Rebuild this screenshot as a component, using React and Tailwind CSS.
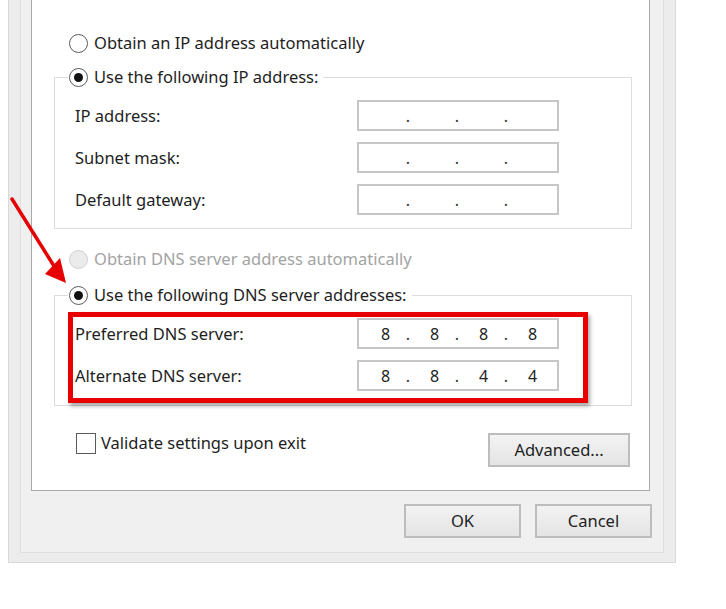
import React from "react";

const Radio = ({ checked, disabled }) => (
    <span
        className={`flex items-center justify-center w-[19px] h-[19px] rounded-full border-[1.5px] shrink-0 ${disabled ? "border-[#cfcfcf] bg-[#ebebeb]" : "border-[#5a5a5a] bg-white"
            }`}
    >
        {checked && <span className="w-[9px] h-[9px] rounded-full bg-[#111]" />}
    </span>
);

const IpBox = ({ parts = ["", "", "", ""] }) => (
    <div className="flex items-center h-[31px] w-[202px] border-2 border-[#c6c6c6] bg-white pl-[2px] text-[16px]">
        {parts.map((p, i) => (
            <React.Fragment key={i}>
                {i > 0 && (
                    <span className="relative w-0 flex justify-center">
                        <span className="absolute -translate-x-1/2 top-[-12px] text-[#333]">.</span>
                    </span>
                )}
                <span className="w-[49px] text-center text-[#222]">{p}</span>
            </React.Fragment>
        ))}
    </div>
);

const Row = ({ label, parts }) => (
    <div className="grid grid-cols-[282px_202px] items-center h-[31px] pl-[7px]">
        <span>{label}</span>
        <IpBox parts={parts} />
    </div>
);

const Button = ({ children, className = "" }) => (
    <button
        className={`h-[34px] border-2 border-[#bdbdbd] bg-gradient-to-b from-[#f3f3f3] to-[#e4e4e4] text-[#1e1e1e] ${className}`}
    >
        {children}
    </button>
);

export default function App() {
    return (
        <div className="relative w-[726px] h-[609px] bg-white overflow-hidden text-[16.5px] leading-[24px] text-[#1e1e1e] font-['Noto_Sans',sans-serif]">
            <div className="ml-[8px] w-[668px] h-[563px] bg-[#ececec] border-x border-b border-[#d8d8d8] pl-[11px] pr-[11px] pb-[9px]">
                <div className="h-full bg-[#f0f0f0] border-x border-b border-[#dedede] pl-[10px]">
                    <div className="w-[619px] h-[491px] bg-white border-x border-b border-[#a9a9a9]">
                        <div className="pt-[31px] pl-[37px] flex items-center gap-[6px]">
                            <Radio />
                            <span>Obtain an IP address automatically</span>
                        </div>

                        <fieldset className="mt-[10px] ml-[22px] w-[578px] border border-[#dcdcdc] pl-[13px] pb-[13px]">
                            <legend className="flex items-center gap-[6px] pl-[1px] pr-[5px]">
                                <Radio checked />
                                <span>Use the following IP address:</span>
                            </legend>
                            <div className="pt-[11px] flex flex-col gap-[11px]">
                                <Row label="IP address:" />
                                <Row label="Subnet mask:" />
                                <Row label="Default gateway:" />
                            </div>
                        </fieldset>

                        <div className="mt-[18px] pl-[37px] flex items-center gap-[6px] text-[#a3a3a3]">
                            <Radio disabled />
                            <span>Obtain DNS server address automatically</span>
                        </div>

                        <fieldset className="mt-[12px] ml-[22px] w-[578px] border border-[#dcdcdc] pl-[13px] pb-[14px]">
                            <legend className="flex items-center gap-[6px] pl-[1px] pr-[5px]">
                                <Radio checked />
                                <span>Use the following DNS server addresses:</span>
                            </legend>
                            <div className="relative mt-[11px] flex flex-col gap-[11px]">
                                <Row label="Preferred DNS server:" parts={["8", "8", "8", "8"]} />
                                <Row label="Alternate DNS server:" parts={["8", "8", "4", "4"]} />
                                <div className="absolute left-0 -top-[6px] w-[520px] h-[91px] border-[5px] border-[#e80000] shadow-[2px_3px_4px_rgba(0,0,0,0.35)] pointer-events-none" />
                            </div>
                        </fieldset>

                        <div className="ml-[22px] w-[578px] flex justify-between items-start mt-[25px] pr-[2px]">
                            <div className="flex items-center gap-[5px] pl-[22px]">
                                <span className="w-[20px] h-[21px] border-[1.5px] border-[#5a5a5a] bg-white" />
                                <span>Validate settings upon exit</span>
                            </div>
                            <Button className="mt-[2px] w-[142px]">Advanced...</Button>
                        </div>
                    </div>

                    <div className="flex justify-end gap-[14px] pr-[11px] mt-[13px]">
                        <Button className="w-[117px]">OK</Button>
                        <Button className="w-[117px]">Cancel</Button>
                    </div>
                </div>
            </div>

            <svg className="absolute left-0 top-0 pointer-events-none" width="726" height="609">
                <line x1="12" y1="199" x2="54" y2="266" stroke="#e60000" strokeWidth="3.5" strokeLinecap="round" />
                <polygon points="66,283 45,274 60,258" fill="#e60000" />
            </svg>
        </div>
    );
}
